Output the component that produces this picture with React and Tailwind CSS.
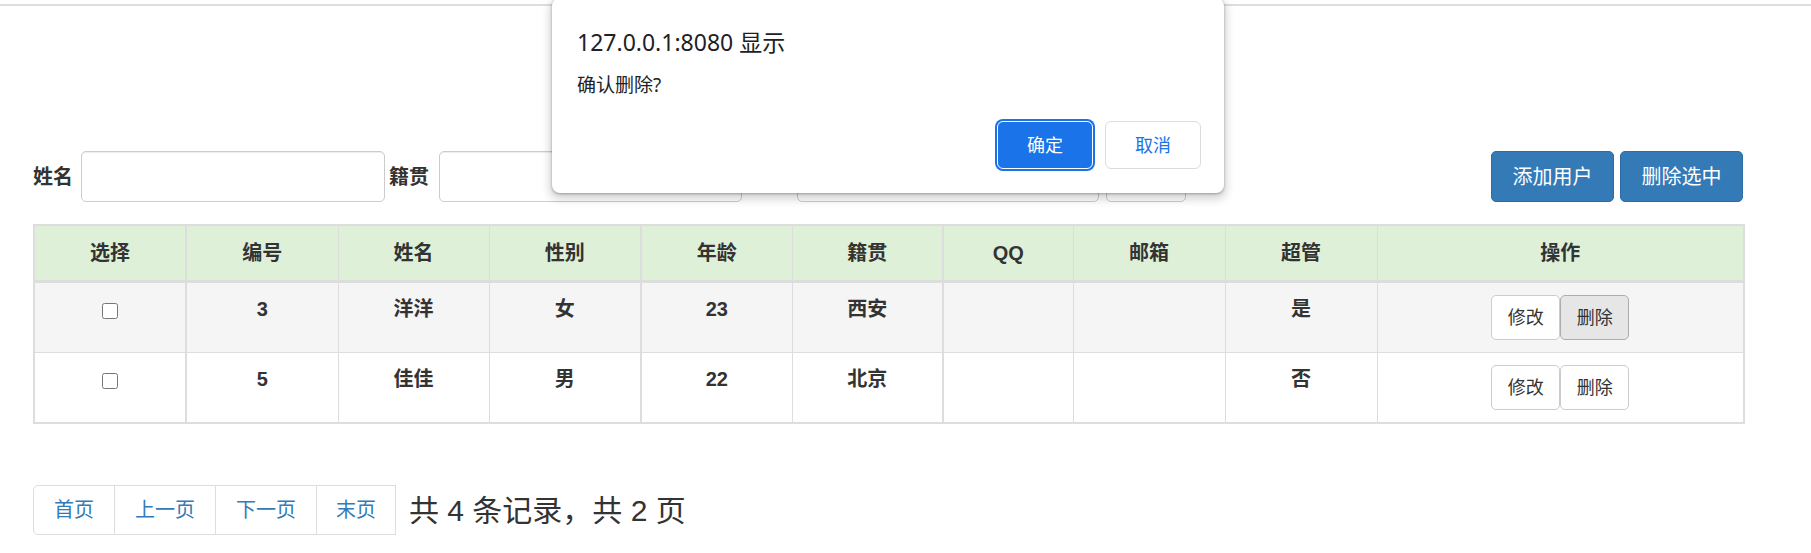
import { useState } from "react";

const cols = [152, 152, 151, 152, 151, 151, 130, 152, 152, 367];
const heads = ["选择", "编号", "姓名", "性别", "年龄", "籍贯", "QQ", "邮箱", "超管", "操作"];
// columns whose left border looks thicker in the screenshot
const thick = [1, 4, 6];

const users = [
  { id: 3, name: "洋洋", sex: "女", age: 23, city: "西安", qq: "", mail: "", admin: "是", active: true },
  { id: 5, name: "佳佳", sex: "男", age: 22, city: "北京", qq: "", mail: "", admin: "否", active: false },
];

export default function App() {
  const [checked, setChecked] = useState({});

  const cell = (i) =>
    `border-[#ddd] ${thick.includes(i) ? "border-l-2" : "border-l"} ${i === 0 ? "border-l-2" : ""} ${
      i === cols.length - 1 ? "border-r-2" : ""
    }`;

  return (
    <div className="relative min-h-screen bg-white text-[#333]" style={{ fontFamily: '"Liberation Sans", "Noto Sans CJK SC", sans-serif' }}>
      <div className="pt-[4px]">
        <div className="h-[2px] bg-[#ddd]" />
      </div>

      <div className="ml-[33px] w-[1710px]">
        {/* search bar */}
        <div className="mt-[145px] flex h-[51px] items-center justify-between">
          <div className="flex items-center">
            <label className="w-[42px] text-[20px] font-bold">姓名</label>
            <input className="ml-[6px] h-[51px] w-[304px] rounded-[5px] border border-[#ccc] px-3 shadow-[inset_0_1px_1px_rgba(0,0,0,0.075)]" />
            <label className="ml-[4px] w-[44px] text-[20px] font-bold">籍贯</label>
            <input className="ml-[6px] h-[51px] w-[303px] rounded-[5px] border border-[#ccc] px-3 shadow-[inset_0_1px_1px_rgba(0,0,0,0.075)]" />
            <label className="ml-[4px] w-[40px] text-[20px] font-bold">性别</label>
            <input className="ml-[11px] h-[51px] w-[302px] rounded-[5px] border border-[#ccc] px-3 shadow-[inset_0_1px_1px_rgba(0,0,0,0.075)]" />
            <button className="ml-[7px] h-[51px] w-[80px] rounded-[5px] border border-[#ccc] bg-white text-[20px]">查询</button>
          </div>
          <div className="flex gap-[6px]">
            <button className="h-[51px] w-[123px] rounded-[5px] border border-[#2e6da4] bg-[#337ab7] text-[20px] text-white">添加用户</button>
            <button className="h-[51px] w-[123px] rounded-[5px] border border-[#2e6da4] bg-[#337ab7] text-[20px] text-white">删除选中</button>
          </div>
        </div>

        {/* user table */}
        <table className="mt-[22px] w-[1710px] table-fixed border-collapse text-center text-[20px] font-bold leading-[28px]">
          <colgroup>
            {cols.map((w, i) => (
              <col key={i} style={{ width: w }} />
            ))}
          </colgroup>
          <thead>
            <tr className="bg-[#dff0d8]">
              {heads.map((h, i) => (
                <th key={h} className={`${cell(i)} border-t-2 border-b-[3px] py-[13px] align-middle`}>
                  {h}
                </th>
              ))}
            </tr>
          </thead>
          <tbody>
            {users.map((u, r) => {
              const vals = [null, u.id, u.name, u.sex, u.age, u.city, u.qq, u.mail, u.admin, null];
              return (
                <tr key={u.id} className={r === 0 ? "bg-[#f5f5f5]" : "bg-white"}>
                  {vals.map((v, i) => (
                    <td
                      key={i}
                      className={`${cell(i)} ${r === users.length - 1 ? "border-b-2" : "border-b"} px-2 py-[12px] align-top`}
                    >
                      {i === 0 ? (
                        <input
                          type="checkbox"
                          checked={!!checked[u.id]}
                          onChange={() => setChecked({ ...checked, [u.id]: !checked[u.id] })}
                          className="mx-auto mt-[8px] block h-[16px] w-[16px]"
                        />
                      ) : i === 9 ? (
                        <div className="flex justify-center">
                          <button className="h-[45px] w-[69px] rounded-[5px] border border-[#ccc] bg-white text-[18px] font-normal">修改</button>
                          <button
                            className={`h-[45px] w-[69px] rounded-[5px] border text-[18px] font-normal ${
                              u.active ? "border-[#adadad] bg-[#e6e6e6]" : "border-[#ccc] bg-white"
                            }`}
                          >
                            删除
                          </button>
                        </div>
                      ) : (
                        v
                      )}
                    </td>
                  ))}
                </tr>
              );
            })}
          </tbody>
        </table>

        {/* pagination */}
        <div className="mt-[61px] flex items-center">
          <div className="flex h-[50px] text-[20px] text-[#337ab7]">
            <a className="flex items-center rounded-l-[5px] border border-[#ddd] px-[20px]">首页</a>
            <a className="-ml-px flex items-center border border-[#ddd] px-[20px]">上一页</a>
            <a className="-ml-px flex items-center border border-[#ddd] px-[20px]">下一页</a>
            <a className="-ml-px flex items-center border border-[#ddd] px-[19px]">末页</a>
          </div>
          <span className="ml-[13px] text-[30px] text-[#333]">共 4 条记录，共 2 页</span>
        </div>
      </div>

      {/* confirm dialog */}
      <div
        className="absolute left-[552px] top-[-2px] h-[195px] w-[672px] rounded-[8px] bg-white shadow-[0_4px_8px_3px_rgba(0,0,0,0.15),0_1px_3px_rgba(0,0,0,0.3)]"
        style={{ fontFamily: '"Noto Sans", "Noto Sans CJK SC", sans-serif' }}
      >
        <div className="pl-[25px] pt-[29px] text-[23px] leading-[30px] text-[#202124]">127.0.0.1:8080 显示</div>
        <div className="mt-[15px] pl-[25px] text-[19px] leading-[26px] text-[#202124]">确认删除?</div>
        <div className="mt-[23px] flex justify-end gap-[12px] pr-[23px]">
          <button className="h-[48px] w-[96px] rounded-[6px] border border-white bg-[#1a73e8] text-[18px] text-white shadow-[0_0_0_2px_#1a73e8]">确定</button>
          <button className="h-[48px] w-[96px] rounded-[6px] border border-[#dadce0] bg-white text-[18px] text-[#1a73e8]">取消</button>
        </div>
      </div>
    </div>
  );
}
